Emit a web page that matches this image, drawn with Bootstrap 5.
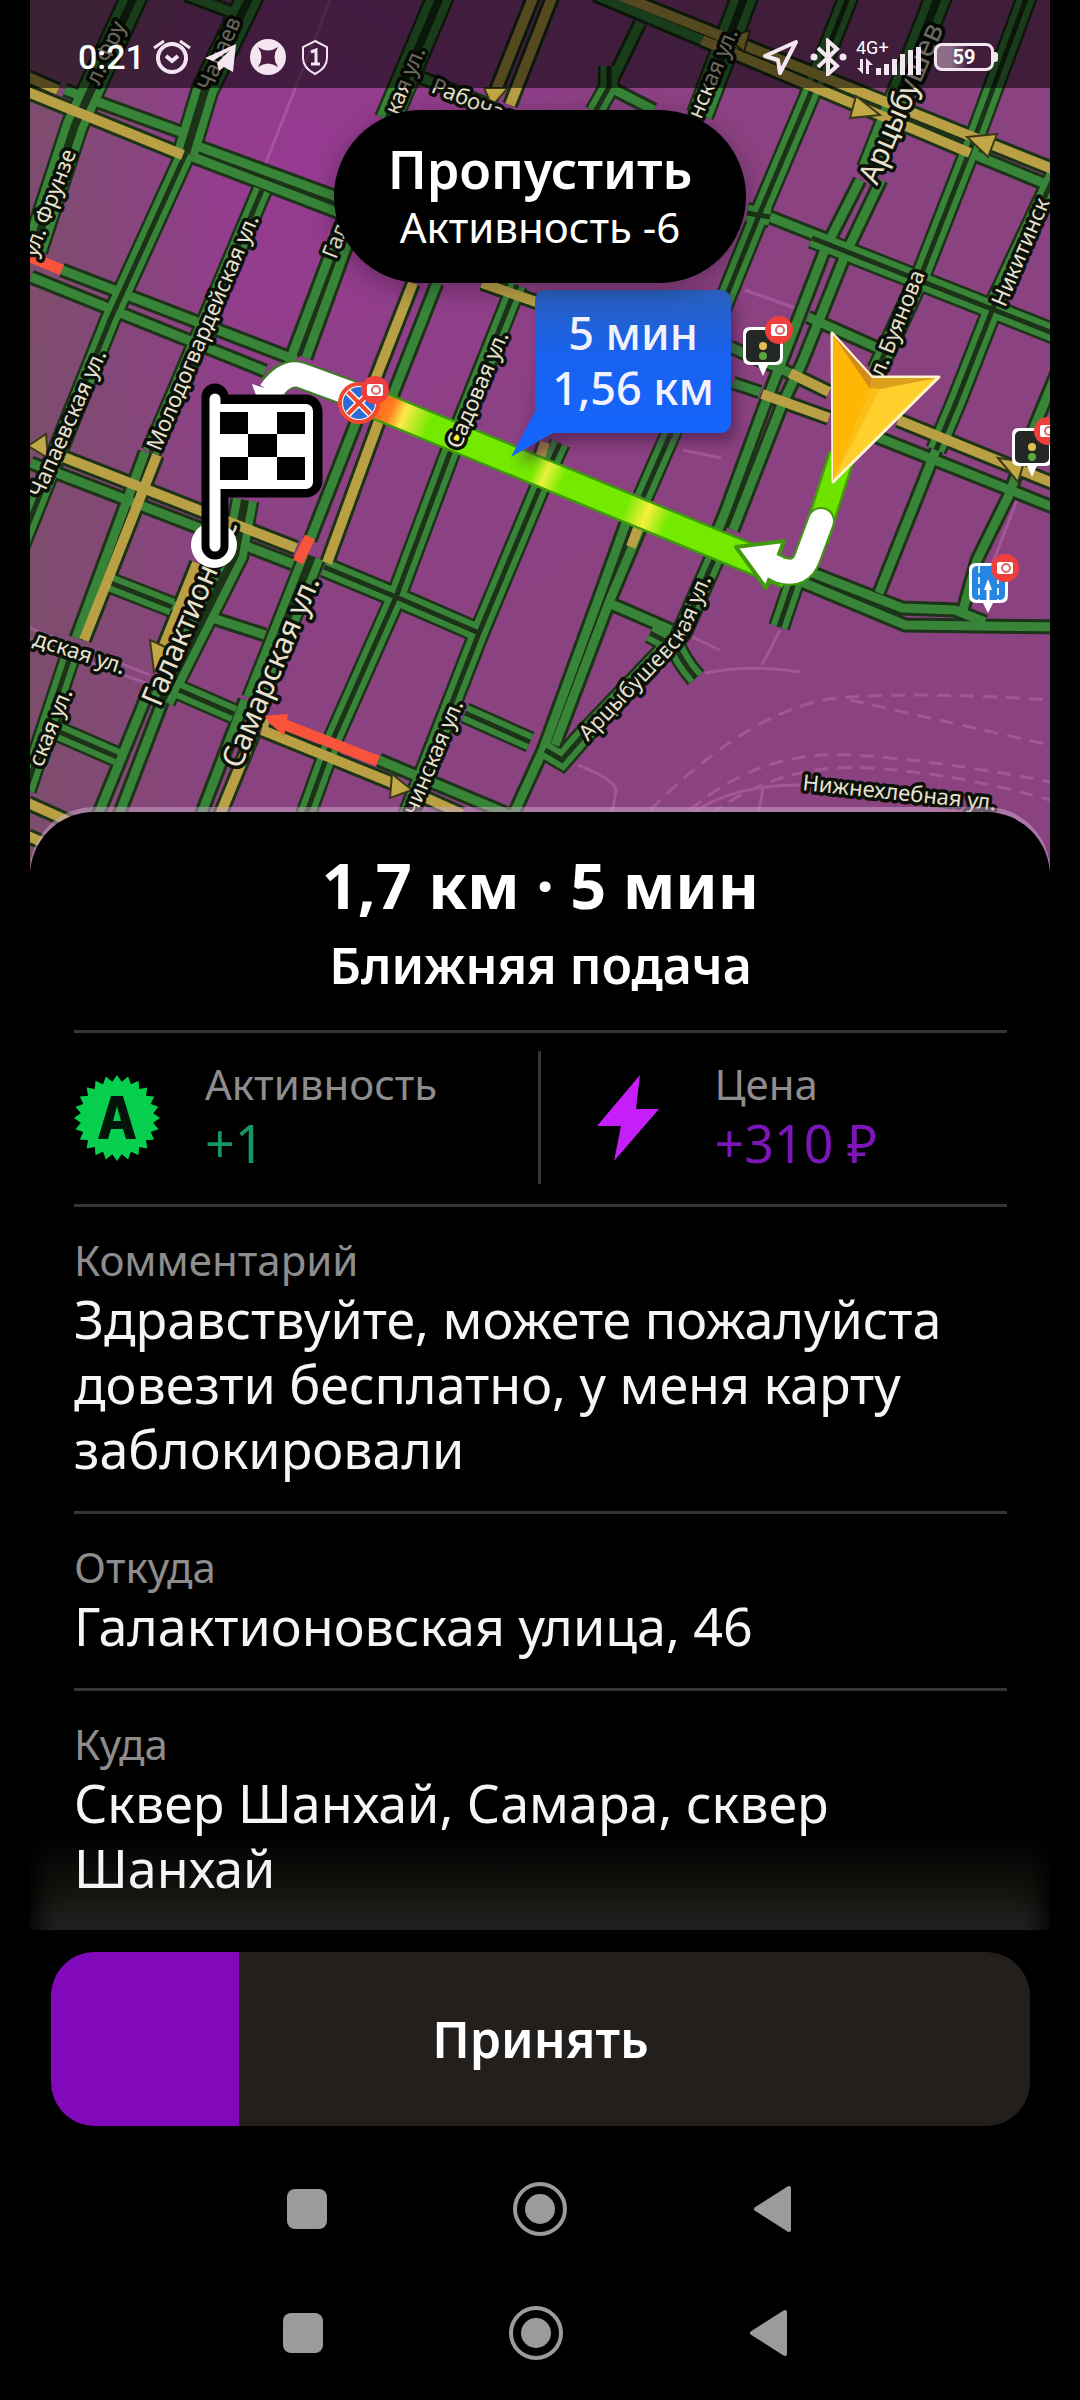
<!DOCTYPE html>
<html lang="ru">
<head>
<meta charset="utf-8">
<meta name="viewport" content="width=device-width, initial-scale=1">
<title>Заказ</title>
<link href="https://cdn.jsdelivr.net/npm/bootstrap@5.3.0/dist/css/bootstrap.min.css" rel="stylesheet">
<style>
  body { background: #000; color: #fff; font-family: "Noto Sans", "Open Sans", sans-serif; }
  .screen { padding: 0 30px; }
  .map-area { height: 872px; background: #8c4182; }
  .map-svg { width: 100%; height: 100%; display: block; }
  .status-bar { top: 0; left: 0; right: 0; height: 88px; background: rgba(0,0,0,.54); padding: 26px 52px 0 48px; font-family: Roboto, sans-serif; }
  .clock { font-size: 34px; line-height: 62px; font-weight: 500; margin-right: 8px; }
  .status-right { height: 62px; }
  .net-box { margin: 0 12px 0 4px; }
  .net-label { font-size: 18px; line-height: 18px; }
  .battery { width: 60px; height: 28px; border: 3px solid #f3e6f1; border-radius: 8px; background: linear-gradient(90deg, #8d6d88 25%, transparent 60%); font-size: 20px; line-height: 22px; font-weight: 700; }
  .battery-tip { width: 4px; height: 10px; background: #f3e6f1; border-radius: 0 3px 3px 0; }
  .skip-btn { top: 110px; left: 50%; transform: translateX(-50%); width: 412px; height: 173px; border: 0; border-radius: 87px; background: #000; color: #fff; box-shadow: 0 6px 26px rgba(0,0,0,.3); }
  .skip-title { font-size: 52px; line-height: 60px; font-weight: 600; }
  .skip-sub { font-size: 42px; line-height: 56px; }
  .sheet { margin-top: -60px; background: #000; border-radius: 64px 64px 0 0; padding: 33px 43px 0 44px; box-shadow: 0 -5px 0 rgba(205,170,205,.5); }
  .trip-title { font-size: 63px; line-height: 80px; font-weight: 700; margin: 0; }
  .trip-sub { font-size: 50px; line-height: 64px; font-weight: 600; margin: 8px 0 33px; }
  .line-top { border-top: 3px solid #343434; }
  .cap-text { font-size: 42px; line-height: 48px; color: #8e8c8c; margin: 0 0 2px; }
  .val-text { font-size: 52px; line-height: 65px; margin: 0; color: #f5f5f5; }
  .stats { padding: 18px 0 20px; }
  .stat-cell { height: 133px; }
  .stat-left { border-right: 3px solid #343434; }
  .stat-left svg { margin-right: 45px; }
  .stat-right { padding-left: 56px; }
  .stat-right svg { margin-right: 56px; }
  .plus-green { color: #159763; }
  .plus-violet { color: #7d16b8; }
  .info-block { padding: 29px 0 30px; }
  .fade-block { margin: 0 -43px 0 -44px; padding: 0 43px 0 44px; background: linear-gradient(180deg, #000 60%, #141510 85%, #222 100%); box-shadow: inset 30px 0 24px -22px #000, inset -30px 0 24px -22px #000; }
  .accept-wrap { padding: 22px 20px 21px 21px; }
  .accept-btn { height: 174px; border: 0; border-radius: 44px; background: #231f1c; color: #fff; font-size: 50px; line-height: 64px; font-weight: 600; }
  .accept-fill { top: 0; left: 0; bottom: 0; background: #8209bb; }
  .nav-keys { height: 124px; gap: 177px; }
  .nav-keys button { width: 56px; height: 56px; border: 0; background: none; padding: 0; }
  /* map */
  .casing { stroke: #1c3318; fill: none; }
  .lane { stroke: #388539; fill: none; }
  .sand { stroke: #b9a045; fill: none; }
  .jam { stroke: #f9533c; fill: none; }
  .faint { stroke: #b066a6; fill: none; stroke-width: 3; opacity: .6; }
  .street { fill: #e9e2d0; stroke: #0b1108; stroke-width: 7; paint-order: stroke; stroke-linejoin: round; font-family: "Noto Sans", sans-serif; font-size: 22px; }
  .street-big { font-size: 30px; }
  .eta { fill: #f2f2ff; font-family: "Noto Sans", sans-serif; font-size: 45px; font-weight: 500; text-anchor: middle; }
</style>
</head>
<body>
<main class="screen">
  <section class="map-area position-relative overflow-hidden">
    <svg class="map-svg" viewBox="30 0 1020 872" preserveAspectRatio="xMidYMin slice" role="img" aria-label="Карта маршрута">
      <defs>
        <radialGradient id="ground" gradientUnits="userSpaceOnUse" cx="300" cy="160" r="560">
          <stop offset="0" stop-color="#963a92"/><stop offset=".6" stop-color="#8c4184"/><stop offset="1" stop-color="#8b4280"/>
        </radialGradient>
        <linearGradient id="haze" x1="0" x2="1"><stop offset="0" stop-color="#7a5068" stop-opacity=".8"/><stop offset="1" stop-color="#7a5068" stop-opacity="0"/></linearGradient>
        <linearGradient id="route" gradientUnits="userSpaceOnUse" x1="370" y1="402" x2="788" y2="574">
          <stop offset="0" stop-color="#ff5a20"/><stop offset=".05" stop-color="#ff8020"/><stop offset=".08" stop-color="#ffe94a"/><stop offset=".14" stop-color="#74ea00"/>
          <stop offset=".39" stop-color="#74ea00"/><stop offset=".42" stop-color="#e8f23a"/><stop offset=".46" stop-color="#74ea00"/>
          <stop offset=".61" stop-color="#74ea00"/><stop offset=".66" stop-color="#f6f03c"/><stop offset=".71" stop-color="#74ea00"/><stop offset="1" stop-color="#74ea00"/>
        </linearGradient>
        <linearGradient id="call" x1="0" x2="0" y1="0" y2="1"><stop offset="0" stop-color="#2a60be"/><stop offset=".4" stop-color="#1862f0"/><stop offset="1" stop-color="#1465ff"/></linearGradient>
        <filter id="soft" x="-20%" y="-20%" width="140%" height="150%"><feGaussianBlur stdDeviation="7"/></filter>
        <!-- avenues with two carriageways drawn close together -->
        <g id="twin">
          <path d="M262,190 L165,420 L151,452"/>
          <path d="M186,153 L110,320 L20,545"/>
          <path d="M69,660 L26,790"/>
          <path d="M517,285 L451,450 L396,597 L334,737 L304,820"/>
          <path d="M560,443 L540,487 L479,633 L408,815"/>
          <path d="M855,-20 L809,97 L760,213 L671,433 L643,497"/>
          <path d="M1033,-20 L974,140 L922,273 L877,370"/>
          <path d="M1062,160 L995,303 L957,400 L936,450"/>
          <path d="M324,567 L396,597 L479,633"/>
          <path d="M103,580 L172,607"/>
          <path d="M179,690 L234,714"/>
          <path d="M48,727 L117,757"/>
          <path d="M465,713 L530,742"/>
          <path d="M812,238 L1060,336"/>
          <path d="M795,580 L779,627"/>
          <path d="M673,640 Q680,660 696,678"/>
          <path d="M650,633 L673,645"/>
          <path d="M545,750 L562,760 L582,737 L682,632 L716,555"/>
          <path d="M609,66 L609,87 L595,112"/>
          <path d="M747,213 L770,217"/>
        </g>
        <g id="wide">
          <path d="M137,-10 L75,125 L34,250"/>
          <path d="M253,-10 L205,90 L186,153"/>
          <path d="M443,-10 L388,120"/>
          <path d="M747,-10 L700,115"/>
          <path d="M941,-10 L870,170"/>
          <path d="M312,556 L255,700"/>
          <path d="M245,500 L235,555 L162,700"/>
        </g>
        <g id="single">
          <path d="M65,90 L189,135"/>
          <path d="M200,147 L345,200"/><path d="M193,157 L345,215"/>
          <path d="M62,270 L296,360"/><path d="M31,277 L265,371"/>
          <path d="M345,215 L292,355"/><path d="M358,215 L306,358"/>
          <path d="M437,283 L392,397"/><path d="M357,420 L310,540"/>
          <path d="M145,452 L76,638"/>
          <path d="M31,463 L293,564"/>
          <path d="M172,605 L265,635"/>
          <path d="M145,700 L98,815"/><path d="M163,700 L119,815"/>
          <path d="M245,700 L201,815"/><path d="M292,600 L262,700"/>
          <path d="M379,760 L510,815"/>
          <path d="M860,180 L826,247 L795,327 L764,407 L726,510 L708,555"/>
          <path d="M881,180 L846,253 L802,363 L781,407 L733,530"/>
          <path d="M626,523 L598,600 L543,750 L511,820"/><path d="M648,510 L610,600 L555,745"/>
          <path d="M770,217 L828,240"/>
          <path d="M808,317 L880,349"/>
          <path d="M730,347 L790,373"/><path d="M733,383 L760,392"/>
          <path d="M877,437 L1060,510"/>
          <path d="M936,450 L879,593"/>
          <path d="M1058,370 L1036,423 L1008,497 L977,560 L963,610"/>
          <path d="M805,570 L902,608 L955,610 L985,622"/><path d="M790,577 L905,625 L1060,627"/>
          <path d="M609,603 L671,630"/>
          <path d="M640,23 L609,87 L654,110"/>
          <path d="M420,77 L496,108"/>
          <path d="M595,-5 L702,40"/><path d="M970,153 L1060,190"/>
          <path d="M186,-5 L232,12"/>
        </g>
        <g id="gold">
          <path d="M28,77 L58,90"/><path d="M28,92 L183,155"/>
          <path d="M413,283 L375,380"/><path d="M380,418 L327,563"/>
          <path d="M157,455 L84,640"/>
          <path d="M48,451 L296,548"/>
          <path d="M197,563 L160,655"/>
          <path d="M255,730 L220,815"/>
          <path d="M262,730 L395,784"/><path d="M424,797 L462,814"/>
          <path d="M534,-5 L496,90"/><path d="M553,-5 L510,105"/>
          <path d="M619,-5 L1055,170"/><path d="M702,40 L970,153"/>
          <path d="M482,283 L545,305"/>
          <path d="M790,373 L829,392"/><path d="M762,394 L829,418"/>
          <path d="M898,420 L1060,486"/>
          <path d="M545,442 L536,470"/><path d="M641,520 L631,547"/>
          <path d="M28,803 L75,824"/><path d="M28,836 L60,850"/>
        </g>
        <g id="cam">
          <circle r="14" fill="#ee3f3c"/><rect x="-8" y="-6" width="16" height="12" rx="2" fill="#fff"/><circle cx="1" r="4" fill="none" stroke="#d66" stroke-width="2"/>
        </g>
        <g id="light">
          <path d="M-20,-12 Q-20,-19 -13,-19 H13 Q20,-19 20,-12 V12 Q20,19 13,19 H5 L0,30 L-5,19 H-13 Q-20,19 -20,12Z" fill="#fff"/>
          <rect x="-17" y="-16" width="34" height="32" rx="5" fill="#242824"/>
          <circle cy="0" r="4" fill="#e2bf50"/><circle cy="10" r="4" fill="#5aa83d"/>
          <use href="#cam" x="16" y="-16"/>
        </g>
      </defs>
      <rect x="30" width="1020" height="872" fill="url(#ground)"/>
      <rect x="30" width="200" height="872" fill="url(#haze)"/>

      <g class="faint">
        <path d="M330,0 L265,165"/><path d="M30,628 L150,675 M30,640 L148,684"/>
        <path d="M683,450 L721,458"/><path d="M690,636 L720,650"/>
        <path d="M780,630 L762,665 M705,673 Q750,664 800,672"/>
        <path d="M578,765 Q615,780 616,790 L612,815"/><path d="M690,815 Q730,785 800,785 M763,788 L758,815"/>
        <path d="M1017,500 L990,570"/><path d="M745,290 L795,308"/>
        <g stroke-dasharray="14 9"><path d="M650,810 Q760,700 850,697 Q930,692 1050,700"/><path d="M850,700 L1050,745"/><path d="M690,810 Q760,750 850,755 T1050,782"/><path d="M710,815 Q780,762 870,768 T1050,800"/></g>
      </g>

      <use href="#single" class="casing" stroke-width="15"/>
      <use href="#gold" class="casing" stroke-width="16"/>
      <use href="#twin" class="casing" stroke-width="22"/>
      <use href="#wide" class="casing" stroke-width="29"/>
      <use href="#single" class="lane" stroke-width="9"/>
      <use href="#twin" class="lane" stroke-width="17"/>
      <use href="#wide" class="lane" stroke-width="24"/>
      <use href="#twin" class="casing" stroke-width="5"/>
      <use href="#wide" class="casing" stroke-width="8"/>
      <use href="#gold" class="sand" stroke-width="10"/>
      <g class="jam" stroke-width="11">
        <path d="M28,256 L62,270"/><path d="M310,537 L298,562"/><path d="M378,761 L278,722"/>
      </g>
      <path d="M262,716 L288,714 L284,736Z" fill="#f9533c"/>
      <circle cx="263" cy="724" r="6" fill="#b9a045"/>
      <g fill="#c2a846" stroke="#3a3a18" stroke-width="2">
        <path d="M412,790 L392,774 L390,798Z"/><path d="M28,446 L46,434 L48,458Z"/>
        <path d="M154,672 L150,640 L172,650Z"/><path d="M484,88 H508 L492,106Z"/>
        <path d="M728,38 L750,30 L744,52Z"/><path d="M880,115 L856,96 L850,118Z"/>
        <path d="M967,137 L997,134 L988,157Z"/><path d="M998,458 L1018,482 L1024,462Z"/>
      </g>

      <g class="street">
        <text transform="translate(36,258) rotate(-69)">ул. Фрунзе</text>
        <text transform="translate(99,86) rotate(-66)">л. Фру</text>
        <text transform="translate(211,92) rotate(-67)">Чапаев</text>
        <text transform="translate(160,452) rotate(-67)">Молодогвардейская ул.</text>
        <text transform="translate(42,499) rotate(-66)">Чапаевская ул.</text>
        <text transform="translate(336,260) rotate(-69)">Галакт</text>
        <text transform="translate(398,116) rotate(-67)">кая ул.</text>
        <text transform="translate(430,92) rotate(22)">Рабочая</text>
        <text transform="translate(32,645) rotate(18)">дская ул.</text>
        <text transform="translate(42,768) rotate(-68)">ская ул.</text>
        <text transform="translate(416,816) rotate(-67)">чинская ул.</text>
        <text transform="translate(701,120) rotate(-67)">нская ул.</text>
        <text transform="translate(883,378) rotate(-68)">л. Буянова</text>
        <text transform="translate(1005,308) rotate(-67)">Никитинск</text>
        <text transform="translate(802,790) rotate(6)">Нижнехлебная ул.</text>
        <path id="arc" d="M588,742 L676,650 Q690,634 700,606 L736,520" fill="none" stroke="none"/>
        <text><textPath href="#arc">Арцыбушевская ул.</textPath></text>
      </g>
      <g class="street street-big">
        <text transform="translate(160,708) rotate(-67)">Галактионовс</text>
        <text transform="translate(240,770) rotate(-67)">Самарская ул.</text>
        <text transform="translate(877,186) rotate(-67)">Арцыбушев</text>
      </g>

      <path d="M370,402 L788,574" stroke="#3f9a10" stroke-width="31" fill="none"/>
      <path d="M842,455 L815,540" stroke="#3f9a10" stroke-width="28" fill="none"/>
      <path d="M370,402 L788,574" stroke="url(#route)" stroke-width="26" fill="none"/>
      <path d="M842,455 L815,540" stroke="#6fe300" stroke-width="23" fill="none"/>
      <circle cx="457" cy="438" r="8" fill="#f4f03c"/>
      <text class="street" transform="translate(460,450) rotate(-67)">Садовая ул.</text>
      <g fill="none" stroke-linecap="round" stroke-linejoin="round">
        <path d="M821,521 L808,556 Q801,577 780,570 L768,564" stroke="#3f9a10" stroke-width="28"/>
        <path d="M736,547 L784,541 L766,588Z" fill="#fff" stroke="#3f9a10" stroke-width="4"/>
        <path d="M821,521 L808,556 Q801,577 780,570 L768,564" stroke="#fff" stroke-width="24"/>
        <path d="M352,394 L300,375 Q285,371 272,388" stroke="#3f7a28" stroke-width="28" stroke-linecap="butt"/>
        <path d="M352,394 L300,375 Q285,371 270,392" stroke="#fff" stroke-width="24" stroke-linecap="butt"/>
      </g>
      <path d="M252,384 L290,396 L262,412Z" fill="#fff"/>

      <!-- no-stopping sign -->
      <circle cx="359" cy="403" r="21" fill="#f0482f"/>
      <circle cx="359" cy="403" r="17" fill="#fff"/><circle cx="359" cy="403" r="16" fill="#2a6bd6"/>
      <path d="M348,392 L370,414 M370,392 L348,414" stroke="#fff" stroke-width="7"/><path d="M348,392 L370,414 M370,392 L348,414" stroke="#f0482f" stroke-width="4"/>
      <use href="#cam" x="375" y="390"/>

      <!-- finish flag -->
      <circle cx="214" cy="545" r="23" fill="#fff"/>
      <path d="M215,397 V546 M217,408 H305 Q309,408 309,412 V480 Q309,484 305,484 H217Z" fill="#000" stroke="#000" stroke-width="27" stroke-linecap="round" stroke-linejoin="round"/>
      <path d="M215,399 V546" stroke="#fff" stroke-width="11" stroke-linecap="round"/>
      <rect x="212" y="404" width="101" height="85" rx="7" fill="#fff"/>
      <path d="M220,412h28v22h-28z M277,412h28v22h-28z M248,434h29v23h-29z M220,457h28v23h-28z M277,457h28v23h-28z" fill="#000"/>

      <!-- time and distance -->
      <path d="M548,296 H722 Q736,296 736,310 V430 Q736,442 722,442 H566 L520,464 L535,420Z" fill="#3a1440" opacity=".55" filter="url(#soft)"/>
      <path d="M547,290 H719 Q731,290 731,302 V421 Q731,433 719,433 H553 L511,457 L535,411 V302 Q535,290 547,290Z" fill="url(#call)"/>
      <text class="eta" x="633" y="350">5 мин</text>
      <text class="eta" x="633" y="405">1,56 км</text>

      <!-- cameras and lights -->
      <use href="#light" x="763" y="346"/>
      <use href="#light" x="1032" y="447"/>
      <path d="M969,570 Q969,563 976,563 H1001 Q1008,563 1008,570 V595 Q1008,603 1001,603 H993 L988,613 L983,603 H976 Q969,603 969,595Z" fill="#fff"/>
      <rect x="972" y="566" width="33" height="34" rx="5" fill="#2786e0"/>
      <path d="M979,566 V600 M998,566 V600" stroke="#d7ebff" stroke-width="2" stroke-dasharray="7 4"/>
      <path d="M988,604 V588" stroke="#fff" stroke-width="3"/><path d="M984,590 L988,579 L992,590Z" fill="#fff"/>
      <use href="#cam" x="1005" y="568"/>

      <!-- driver pointer -->
      <path d="M832,333 L872,377 L939,377 L833,482Z" fill="#ffd02c" stroke="#fff4d0" stroke-width="3" stroke-linejoin="round"/>
      <path d="M833,335 L871,388 L833,481Z" fill="#ffb704"/>
      <path d="M833,335 L872,378 L871,390Z" fill="#d48a1c"/>
      <path d="M872,378 L937,378 L870,391Z" fill="#dba01c"/>
      <path d="M871,388 L833,481 L880,389Z" fill="#fcbf1a"/>
    </svg>

    <div class="status-bar position-absolute d-flex justify-content-between align-items-start">
      <div class="d-flex align-items-center">
        <span class="clock text-white">0:21</span>
        <svg width="180" height="38" viewBox="0 0 180 38" fill="none" stroke="#f3e6f1" stroke-width="3" aria-hidden="true">
          <circle cx="19" cy="20" r="14" stroke-width="4"/><path d="M13,18 L19,23 L25,18" stroke-width="4"/><path d="M1,10 L11,3 M37,10 L27,3"/>
          <path d="M52,20 L83,6 L80,34 L71,29 L66,33 L64,25 L77,12 L60,23Z" fill="#f3e6f1" stroke="none"/>
          <circle cx="115" cy="19" r="18" fill="#f3e6f1" stroke="none"/>
          <path d="M105,9 Q115,16 125,9 Q118,19 125,29 Q115,22 105,29 Q112,19 105,9Z" fill="#4a1c44" stroke="none"/>
          <path d="M162,3 L174,9 V20 Q174,30 162,36 Q150,30 150,20 V9Z" stroke-width="2"/><path d="M158,14 L163,12 V26 M158,26 H167"/>
        </svg>
      </div>
      <div class="status-right d-flex align-items-center">
        <svg width="90" height="38" viewBox="0 0 90 38" fill="none" stroke="#f3e6f1" stroke-width="3" aria-hidden="true">
          <path d="M3,18 L34,4 L18,35 L16,22Z" stroke-width="4" stroke-linejoin="round"/>
          <path d="M56,10 L75,28 L66,36 V3 L75,11 L56,29" stroke-width="4"/><circle cx="52" cy="19" r="2" fill="#f3e6f1"/><circle cx="81" cy="19" r="2" fill="#f3e6f1"/>
        </svg>
        <div class="net-box d-flex flex-column">
          <span class="net-label">4G+</span>
          <svg width="66" height="18" viewBox="0 0 66 18" overflow="visible" fill="#f3e6f1" aria-hidden="true">
            <path d="M4,2h3v15l-6,-6h3z M10,17h3v-9h4l-7,-7z"/>
            <path d="M20,11h5v7h-5z M28,7h5v11h-5z M36,2h5v16h-5z M44,-3h5v21h-5z M52,-7h5v25h-5z M60,-10h5v28h-5z"/>
          </svg>
        </div>
        <span class="battery text-center">59</span><span class="battery-tip"></span>
      </div>
    </div>

    <button type="button" class="skip-btn position-absolute d-flex flex-column align-items-center justify-content-center">
      <span class="skip-title">Пропустить</span>
      <span class="skip-sub">Активность -6</span>
    </button>
  </section>

  <section class="sheet position-relative">
    <header class="text-center">
      <h1 class="trip-title">1,7 км · 5 мин</h1>
      <p class="trip-sub">Ближняя подача</p>
    </header>
    <div class="stats line-top row g-0">
      <div class="col-6 stat-cell stat-left d-flex align-items-center">
        <svg width="86" height="86" viewBox="-43 -43 86 86" aria-hidden="true">
          <g fill="#06d04e">
            <circle r="35"/>
            <g id="teeth"><path id="tooth" d="M-7,-33 L0,-43 L7,-33Z"/><use href="#tooth" transform="rotate(15)"/><use href="#tooth" transform="rotate(30)"/><use href="#tooth" transform="rotate(45)"/><use href="#tooth" transform="rotate(60)"/><use href="#tooth" transform="rotate(75)"/></g>
            <use href="#teeth" transform="rotate(90)"/><use href="#teeth" transform="rotate(180)"/><use href="#teeth" transform="rotate(270)"/>
          </g>
          <path d="M-19,21 L-6,-22 H6 L19,21 H9 L6,11 H-6 L-9,21Z M-4,3 H4 L0,-12Z" fill="#03140a" fill-rule="evenodd"/>
        </svg>
        <div><p class="cap-text">Активность</p><p class="val-text plus-green">+1</p></div>
      </div>
      <div class="col-6 stat-cell stat-right d-flex align-items-center">
        <svg width="62" height="86" viewBox="0 0 62 86" aria-hidden="true"><path d="M43,0 L0,51 L24,51 L17,86 L62,34 L39,34Z" fill="#c61dfb"/></svg>
        <div><p class="cap-text">Цена</p><p class="val-text plus-violet">+310 ₽</p></div>
      </div>
    </div>
    <div class="info-block line-top">
      <p class="cap-text">Комментарий</p>
      <p class="val-text">Здравствуйте, можете пожалуйста довезти бесплатно, у меня карту заблокировали</p>
    </div>
    <div class="info-block line-top">
      <p class="cap-text">Откуда</p>
      <p class="val-text">Галактионовская улица, 46</p>
    </div>
    <div class="fade-block">
      <div class="info-block line-top">
        <p class="cap-text">Куда</p>
        <p class="val-text">Сквер Шанхай, Самара, сквер Шанхай</p>
      </div>
    </div>
  </section>

  <div class="accept-wrap">
    <button type="button" class="accept-btn w-100 position-relative overflow-hidden">
      <span class="accept-fill position-absolute" style="width:19.2%"></span>
      <span class="position-relative">Принять</span>
    </button>
  </div>

  <nav class="nav-keys d-flex justify-content-center align-items-center" aria-label="Системная навигация">
    <button type="button" aria-label="Недавние"><svg width="56" height="56"><rect x="8" y="8" width="40" height="40" rx="8" fill="#9b9b9b"/></svg></button>
    <button type="button" aria-label="Домой"><svg width="56" height="56"><circle cx="28" cy="28" r="25" fill="none" stroke="#9b9b9b" stroke-width="4"/><circle cx="28" cy="28" r="15" fill="#9b9b9b"/></svg></button>
    <button type="button" aria-label="Назад"><svg width="56" height="56"><path d="M11,28 L44,7 V49Z" fill="#9b9b9b" stroke="#9b9b9b" stroke-width="4" stroke-linejoin="round"/></svg></button>
  </nav>
  <nav class="nav-keys d-flex justify-content-center align-items-center pe-2" aria-label="Навигация устройства">
    <button type="button" aria-label="Недавние"><svg width="56" height="56"><rect x="8" y="8" width="40" height="40" rx="8" fill="#9b9b9b"/></svg></button>
    <button type="button" aria-label="Домой"><svg width="56" height="56"><circle cx="28" cy="28" r="25" fill="none" stroke="#9b9b9b" stroke-width="4"/><circle cx="28" cy="28" r="15" fill="#9b9b9b"/></svg></button>
    <button type="button" aria-label="Назад"><svg width="56" height="56"><path d="M11,28 L44,7 V49Z" fill="#9b9b9b" stroke="#9b9b9b" stroke-width="4" stroke-linejoin="round"/></svg></button>
  </nav>
</main>
<script src="https://cdn.jsdelivr.net/npm/bootstrap@5.3.0/dist/js/bootstrap.bundle.min.js"></script>
</body>
</html>
